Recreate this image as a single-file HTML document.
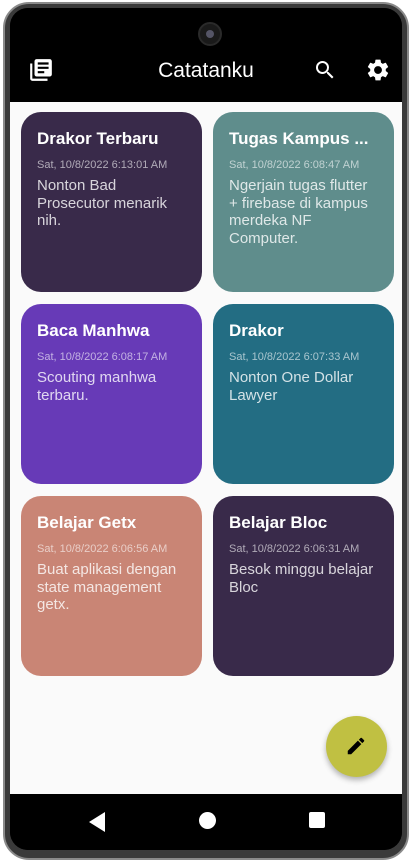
<!DOCTYPE html>
<html><head><meta charset="utf-8"><style>
*{margin:0;padding:0;box-sizing:border-box}
body{width:412px;height:863px;background:#fff;position:relative;overflow:hidden;font-family:"Liberation Sans",sans-serif}
.frame{position:absolute;left:3px;top:2px;width:406px;height:858px;border-radius:26px;background:#3a3a3a;border:2px solid #8a8a8a}
.screen{position:absolute;left:10px;top:8px;width:392px;height:842px;border-radius:18px;background:#000;overflow:hidden}
.content{position:absolute;left:0;top:94px;width:392px;height:692px;background:#fafafa}
.top{position:absolute;left:0;top:0;width:392px;height:94px;background:#000}
.cam{position:absolute;left:188px;top:14px;width:24px;height:24px;border-radius:50%;background:#1a1a1a;border:2px solid #2a2a2a}
.cam:after{content:"";position:absolute;left:6px;top:6px;width:8px;height:8px;border-radius:50%;background:#556}
.title{position:absolute;left:0;width:392px;top:51px;text-align:center;color:#fff;font-size:21px;font-weight:500}
.card{position:absolute;width:181px;height:180px;border-radius:20px;padding:17px 16px;color:#fff}
.card h3{font-size:17px;font-weight:bold;line-height:20px}
.card .d{font-size:11px;color:rgba(255,255,255,.6);margin-top:9px;line-height:14px}
.card p{font-size:15px;line-height:17.5px;color:rgba(255,255,255,.8);margin-top:5px}
.fab{position:absolute;left:316px;top:708px;width:61px;height:61px;border-radius:50%;background:#c0c042;box-shadow:0 3px 6px rgba(0,0,0,.3)}
.nav{position:absolute;left:0;top:786px;width:392px;height:56px;background:#000}
</style></head><body>
<div class="frame"></div>
<div class="screen">
<div class="top">
<div class="cam"></div>
<svg style="position:absolute;left:18px;top:49px" width="26" height="26" viewBox="0 0 24 24" fill="#fff"><path d="M4 6H2v14c0 1.1.9 2 2 2h14v-2H4V6zm16-4H8c-1.1 0-2 .9-2 2v12c0 1.1.9 2 2 2h12c1.1 0 2-.9 2-2V4c0-1.1-.9-2-2-2zm-1 9H9V9h10v2zm-4 4H9v-2h6v2zm4-8H9V5h10v2z"/></svg>
<div class="title">Catatanku</div>
<svg style="position:absolute;left:303px;top:50px" width="24" height="24" viewBox="0 0 24 24" fill="#fff"><path d="M15.5 14h-.79l-.28-.27A6.47 6.47 0 0016 9.5 6.5 6.5 0 109.5 16c1.61 0 3.09-.59 4.23-1.57l.27.28v.79l5 4.99L20.49 19l-4.99-5zm-6 0C7.01 14 5 11.99 5 9.5S7.01 5 9.5 5 14 7.01 14 9.5 11.99 14 9.5 14z"/></svg>
<svg style="position:absolute;left:355px;top:49px" width="26" height="26" viewBox="0 0 24 24" fill="#fff"><path d="M19.14 12.94c.04-.3.06-.61.06-.94 0-.32-.02-.64-.07-.94l2.03-1.58a.49.49 0 00.12-.61l-1.920-3.32a.488.488 0 00-.59-.22l-2.39.96c-.5-.38-1.030-.7-1.62-.94l-.36-2.54a.484.484 0 00-.48-.41h-3.84c-.24 0-.43.17-.47.41l-.36 2.54c-.59.24-1.13.57-1.62.94l-2.39-.96c-.22-.08-.47 0-.59.22L2.74 8.87c-.12.21-.08.47.12.61l2.03 1.58c-.05.3-.09.63-.09.94s.02.64.07.94l-2.03 1.58a.49.49 0 00-.12.61l1.92 3.32c.12.22.37.29.59.22l2.39-.96c.5.38 1.03.7 1.62.94l.36 2.54c.05.24.24.41.48.41h3.84c.24 0 .44-.17.47-.41l.36-2.54c.59-.24 1.13-.56 1.62-.94l2.39.96c.22.08.47 0 .59-.22l1.92-3.32c.12-.22.07-.47-.12-.61l-2.01-1.58zM12 15.6c-1.98 0-3.6-1.62-3.6-3.6s1.62-3.6 3.6-3.6 3.6 1.62 3.6 3.6-1.62 3.6-3.6 3.6z"/></svg>
</div>
<div class="content">
<div class="card" style="left:11px;top:10px;background:#392a4a"><h3>Drakor Terbaru</h3><div class="d">Sat, 10/8/2022 6:13:01 AM</div><p>Nonton Bad Prosecutor menarik nih.</p></div>
<div class="card" style="left:203px;top:10px;background:#5f8d8c"><h3>Tugas Kampus ...</h3><div class="d">Sat, 10/8/2022 6:08:47 AM</div><p>Ngerjain tugas flutter + firebase di kampus merdeka NF Computer.</p></div>
<div class="card" style="left:11px;top:202px;background:#673ab7"><h3>Baca Manhwa</h3><div class="d">Sat, 10/8/2022 6:08:17 AM</div><p>Scouting manhwa terbaru.</p></div>
<div class="card" style="left:203px;top:202px;background:#236d83"><h3>Drakor</h3><div class="d">Sat, 10/8/2022 6:07:33 AM</div><p>Nonton One Dollar Lawyer</p></div>
<div class="card" style="left:11px;top:394px;background:#c98575"><h3>Belajar Getx</h3><div class="d">Sat, 10/8/2022 6:06:56 AM</div><p>Buat aplikasi dengan state management getx.</p></div>
<div class="card" style="left:203px;top:394px;background:#392a4a"><h3>Belajar Bloc</h3><div class="d">Sat, 10/8/2022 6:06:31 AM</div><p>Besok minggu belajar Bloc</p></div>
</div>
<div class="fab"><svg style="position:absolute;left:19px;top:19px" width="22" height="22" viewBox="0 0 24 24" fill="#000"><path d="M3 17.25V21h3.75L17.81 9.94l-3.75-3.75L3 17.25zM20.71 7.04a1 1 0 000-1.41l-2.34-2.34a1 1 0 00-1.41 0l-1.83 1.830 3.75 3.75 1.83-1.83z"/></svg></div>
<div class="nav">
<svg style="position:absolute;left:79px;top:18px" width="18" height="20"><path d="M16 0V20L0 10Z" fill="#fff"/></svg>
<div style="position:absolute;left:189px;top:18px;width:17px;height:17px;border-radius:50%;background:#fff"></div>
<div style="position:absolute;left:299px;top:18px;width:16px;height:16px;border-radius:2px;background:#fff"></div>
</div>
</div>
</body></html>
